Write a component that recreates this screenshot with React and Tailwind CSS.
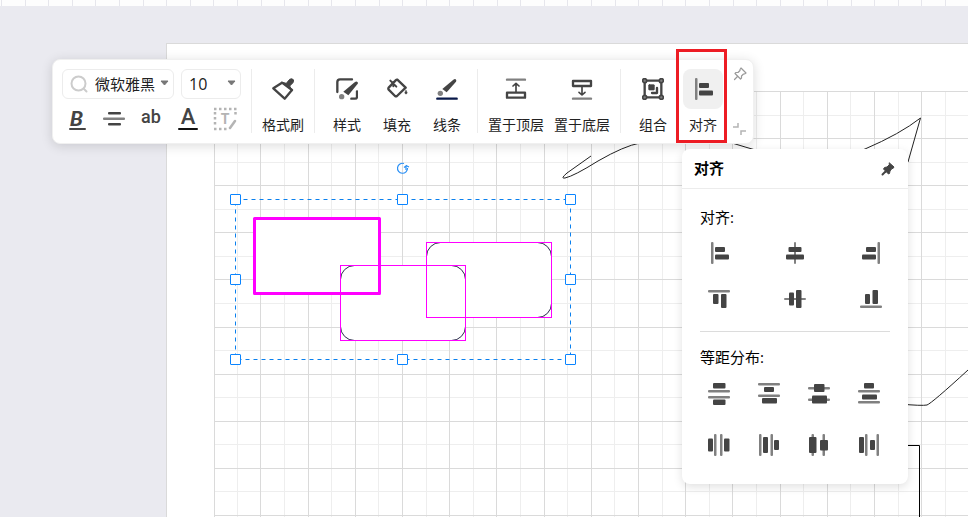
import { useState } from 'react';

const DARK = '#444444';
const GREY = '#808080';

// l = thin guide lines, b = solid bars, each as [x, y, width, height] on a 22px grid
const alignIcons = [
  { name: '左对齐', l: [[3, 0, 2.5, 22]], b: [[7, 5, 10, 5], [7, 12.5, 14, 5]] },
  { name: '水平居中', l: [[10, 0, 2, 22]], b: [[4.5, 5, 13, 5], [2, 12.5, 18, 5]] },
  { name: '右对齐', l: [[17.5, 0, 2.5, 22]], b: [[6, 5, 10, 5], [2, 12.5, 14, 5]] },
  { name: '顶端对齐', l: [[0, 2, 22, 2.5]], b: [[5, 6, 5.5, 10], [13, 6, 5.5, 14]] },
  { name: '垂直居中', l: [[0, 10, 22, 2]], b: [[5, 4.5, 5, 13], [12, 2, 5.5, 18]] },
  { name: '底端对齐', l: [[0, 17.5, 22, 2.5]], b: [[5, 6, 5, 10], [12.5, 2, 5.5, 14]] },
];

const spreadIcons = [
  { name: '垂直等距', l: [[0, 7, 22, 2.5], [0, 13, 22, 2.5]], b: [[5, 0, 12.5, 5.5], [5, 16.5, 12.5, 5.5]] },
  { name: '顶部等距', l: [[0, 0, 22, 2.5], [0, 11.5, 22, 2.5]], b: [[6, 4, 10, 5], [4, 15, 15, 5.5]] },
  { name: '垂直中心等距', l: [[0, 4, 22, 2.5], [0, 15.5, 22, 2.5]], b: [[6, 1, 10.5, 8], [4, 12.5, 15, 8]] },
  { name: '底部等距', l: [[0, 7, 22, 2.5], [0, 18, 22, 2.5]], b: [[6, 0, 10, 5.5], [4, 11.5, 15, 5]] },
  { name: '水平等距', l: [[6, 0, 2.5, 22], [12, 0, 2.5, 22]], b: [[0, 4.5, 5, 13], [16, 4.5, 5.5, 13]] },
  { name: '左侧等距', l: [[1, 0, 2.5, 22], [12.5, 0, 2.5, 22]], b: [[5, 3, 5, 16], [16, 6, 5, 10]] },
  { name: '水平中心等距', l: [[3.5, 0, 2.5, 22], [14.5, 0, 2.5, 22]], b: [[1, 3, 7.5, 16], [12, 6, 8, 10.5]] },
  { name: '右侧等距', l: [[7, 0, 2.5, 22], [18.5, 0, 2.5, 22]], b: [[1, 3, 5, 16], [12, 6, 5, 10]] },
];

function BarIcon({ icon }) {
  return (
    <svg width="22" height="22" viewBox="0 0 22 22">
      {icon.l.map(([x, y, w, h]) => <rect key={`l${x}-${y}`} x={x} y={y} width={w} height={h} rx="1" fill={GREY} />)}
      {icon.b.map(([x, y, w, h]) => <rect key={`b${x}-${y}`} x={x} y={y} width={w} height={h} rx="1" fill={DARK} />)}
    </svg>
  );
}

function Icon({ children }) {
  return (
    <svg width="22" height="22" viewBox="0 0 66 66" fill="none" stroke={DARK} strokeWidth="7" strokeLinecap="round" strokeLinejoin="round">
      {children}
    </svg>
  );
}

function PainterIcon() {
  return (
    <Icon>
      <path d="M4 31L30 14L60 36L38 62Z" />
      <path d="M30 13L43 16L53 4Q59 0 64 5Q67 10 62 15L53 24L60 37Z" fill={DARK} strokeWidth="3" />
    </Icon>
  );
}

function StyleIcon() {
  return (
    <Icon>
      <path d="M4 42V12Q4 4 12 4H48M63 40V56Q63 62 57 62H46" />
      <path d="M63 11Q68 14 64 19L37 52L22 41L56 13Q60 10 63 11Z" fill={DARK} stroke="none" />
      <circle cx="17" cy="56" r="8" fill={GREY} stroke="none" />
    </Icon>
  );
}

function FillIcon() {
  return (
    <Icon>
      <path d="M34 5L59 29L33 54Q30 56 27 54L8 35Q6 32 8 29L29 7Q32 4 34 5Z" />
      <path d="M13 8L31 26M22 12V25" strokeWidth="6" />
      <path d="M60 38Q53 46 60 48Q67 46 60 38Z" fill={DARK} strokeWidth="2" />
    </Icon>
  );
}

function LineIcon() {
  return (
    <Icon>
      <path d="M58 3Q63 6 60 11L32 43L19 33L52 5Q56 2 58 3Z" fill={DARK} stroke="none" />
      <circle cx="13" cy="46" r="8" fill={GREY} stroke="none" />
      <path d="M4 62H62" stroke="#081848" />
    </Icon>
  );
}

function TopIcon() {
  return (
    <Icon>
      <path d="M6 5H60" stroke={GREY} />
      <path d="M33 42V17M24 24L33 16L42 24" strokeWidth="5" />
      <path d="M6 44H60V59H6Z" />
    </Icon>
  );
}

function BottomIcon() {
  return (
    <Icon>
      <path d="M6 9H60V24H6Z" />
      <path d="M33 26V49M24 43L33 51L42 43" strokeWidth="5" />
      <path d="M6 62H60" stroke={GREY} />
    </Icon>
  );
}

function GroupIcon() {
  return (
    <Icon>
      <path d="M8 8H58V58H8Z" />
      {[[8, 8], [58, 8], [8, 58], [58, 58]].map(([x, y]) => (
        <circle key={`${x}-${y}`} cx={x} cy={y} r="6" fill={GREY} strokeWidth="5" />
      ))}
      <rect x="20" y="20" width="17" height="16" rx="2" fill={DARK} strokeWidth="2" />
      <path d="M45 30V45H30" strokeWidth="7" />
    </Icon>
  );
}

function Tool({ label, active, wide, children }) {
  return (
    <button className={`flex flex-col items-center ${wide ? 'w-[66px]' : 'w-[50px]'}`}>
      <span className={`flex size-10 items-center justify-center rounded-lg ${active ? 'bg-[#f0f0f0]' : ''}`}>{children}</span>
      <span className="mt-1.5 text-sm leading-5 whitespace-nowrap text-[#222]">{label}</span>
    </button>
  );
}

function Divider() {
  return <div className="h-16 w-px bg-[#ececec]" />;
}

function Arrow() {
  return (
    <svg className="pointer-events-none absolute top-2.5 right-1" width="9" height="6" viewBox="0 0 9 6">
      <path d="M1 1H8L4.500 5Z" fill="#777" stroke="#777" strokeLinejoin="round" />
    </svg>
  );
}

function TextTools() {
  const [font, setFont] = useState('微软雅黑');
  const [size, setSize] = useState('10');

  return (
    <div className="flex w-[189px] flex-col gap-2">
      <div className="flex gap-[7px]">
        <div className="relative h-[30px] w-28 rounded-md border border-[#ececec]">
          <svg className="pointer-events-none absolute top-[5px] left-[7px]" width="18" height="18" viewBox="0 0 18 18" fill="none" stroke="#ccc" strokeWidth="2" strokeLinecap="round">
            <circle cx="8.500" cy="8.500" r="7" />
            <path d="M14 14L16.500 16.500" />
          </svg>
          <select aria-label="字体" value={font} onChange={(e) => setFont(e.target.value)} className="h-full w-full appearance-none pl-8 text-[15px] leading-7 text-[#222] outline-none">
            <option>微软雅黑</option>
            <option>宋体</option>
          </select>
          <Arrow />
        </div>
        <div className="relative h-[30px] w-[60px] rounded-md border border-[#ececec]">
          <select aria-label="字号" value={size} onChange={(e) => setSize(e.target.value)} className="h-full w-full appearance-none pl-[7px] text-base leading-7 text-[#222] outline-none">
            <option>10</option>
            <option>12</option>
          </select>
          <Arrow />
        </div>
      </div>
      <div className="flex gap-[13px] pl-[3px]">
        <button aria-label="加粗">
          <svg className="overflow-visible" width="24" height="24" viewBox="0 0 24 24" fill={DARK}>
            <text x="5" y="19" fontFamily="Roboto, sans-serif" fontSize="21" fontWeight="700" fontStyle="italic">B</text>
            <rect x="4" y="21" width="17" height="2" rx="1" />
          </svg>
        </button>
        <button aria-label="居中">
          <svg width="24" height="24" viewBox="0 0 24 24" fill={DARK}>
            <rect x="6" y="5" width="13" height="2.500" rx="1" />
            <rect x="1" y="10.500" width="22" height="2.500" rx="1" fill={GREY} />
            <rect x="6" y="16" width="13" height="2.500" rx="1" />
          </svg>
        </button>
        <button aria-label="大小写" className="h-6 w-6 font-['Roboto',sans-serif] text-lg leading-5 font-medium text-[#444]">
          <span className="block h-6">ab</span>
        </button>
        <button aria-label="字体颜色" className="flex h-6 w-6 flex-col items-center font-['Roboto',sans-serif] text-[22px] leading-[19px] font-medium text-[#444]">
          <span>A</span>
          <span className="mt-0.5 h-0.5 w-5 rounded-full bg-[#111]" />
        </button>
        <button aria-label="文本框">
          <svg width="24" height="24" viewBox="0 0 24 24" fill="none" stroke="#b4b4b4" strokeWidth="2.500">
            <path d="M1 2H24M1 22H14M2 5V20M22.500 5V10" strokeDasharray="2.500 2.500" />
            <path d="M17 21L22 14" strokeLinecap="round" />
            <text x="12" y="17" textAnchor="middle" fontFamily="Roboto, sans-serif" fontSize="14" fontWeight="700" fill="#b4b4b4" stroke="none">T</text>
          </svg>
        </button>
      </div>
    </div>
  );
}

function Toolbar() {
  return (
    <div className="absolute top-[59px] left-[52px] flex h-[85px] rounded-lg border border-[#f0f0f0] bg-white pt-[9px] pl-[9px] shadow-[0_2px_12px_rgba(0,0,0,0.14)]">
      <TextTools />
      <Divider />
      <div className="flex items-start px-1.5">
        <Tool label="格式刷"><PainterIcon /></Tool>
      </div>
      <Divider />
      <div className="flex items-start pr-[5px] pl-[7px]">
        <Tool label="样式"><StyleIcon /></Tool>
        <Tool label="填充"><FillIcon /></Tool>
        <Tool label="线条"><LineIcon /></Tool>
      </div>
      <Divider />
      <div className="flex items-start px-[5px]">
        <Tool label="置于顶层" wide><TopIcon /></Tool>
        <Tool label="置于底层" wide><BottomIcon /></Tool>
      </div>
      <Divider />
      <div className="flex items-start pl-[7px]">
        <Tool label="组合"><GroupIcon /></Tool>
        <div className="relative">
          <Tool label="对齐" active><BarIcon icon={alignIcons[0]} /></Tool>
          <div className="pointer-events-none absolute -top-5 -left-0.5 h-[94px] w-[51px] border-3 border-[#ed1c24]" />
        </div>
      </div>
      <div className="flex w-[25px] flex-col items-start justify-between pb-2 pl-[5px]">
        <button aria-label="固定" className="-mt-0.5">
          <svg width="14" height="14" viewBox="0 0 14 14" fill="none" stroke="#999" strokeWidth="1.200" strokeLinejoin="round" strokeLinecap="round">
            <path d="M8 1L13 6L11.500 7H10.500L8.500 9V11L7.500 12L2 6.500L3 5.500H5L7 3.500V2.500Z" />
            <path d="M4.500 9.500L1.500 12.500" />
          </svg>
        </button>
        <button aria-label="收起">
          <svg width="13" height="12" viewBox="0 0 13 12" fill="none" stroke="#b4b4b4" strokeWidth="1.500">
            <path d="M0 4H5V0M8 12V8H13" />
          </svg>
        </button>
      </div>
    </div>
  );
}

function AlignPanel() {
  return (
    <section className="absolute top-[149px] left-[682px] w-[226px] rounded-lg bg-white pb-7 text-[15px] text-black shadow-[0_3px_10px_rgba(0,0,0,0.12)]">
      <header className="flex h-10 items-center justify-between border-b border-[#ececec] px-3">
        <h2 className="font-bold">对齐</h2>
        <button aria-label="固定面板">
          <svg width="16" height="14" viewBox="0 0 16 14" fill={DARK} stroke={DARK} strokeLinejoin="round" strokeLinecap="round">
            <path d="M9.500 1L14 5L13 6.500H12L10 9L9.500 11.500L8.500 12L3.500 7L4.500 5.500L7 5L9 3Z" />
            <path d="M5.500 9.500L2.500 12.500" strokeWidth="2" />
          </svg>
        </button>
      </header>
      <div className="px-[18px]">
        <h3 className="pt-[18px] leading-5">对齐:</h3>
        <div className="mt-[15px] grid grid-cols-[22px_22px_22px] justify-between gap-y-6 px-2">
          {alignIcons.map((icon) => (
            <button key={icon.name} aria-label={icon.name}><BarIcon icon={icon} /></button>
          ))}
        </div>
        <hr className="mt-[21px] border-[#dcdcdc]" />
        <h3 className="mt-[15px] leading-5">等距分布:</h3>
        <div className="mt-4 grid grid-cols-[22px_22px_22px_22px] justify-between gap-y-[29px] pr-2.5 pl-2">
          {spreadIcons.map((icon) => (
            <button key={icon.name} aria-label={icon.name}><BarIcon icon={icon} /></button>
          ))}
        </div>
      </div>
    </section>
  );
}

const range = (n) => Array.from({ length: n }, (_, i) => i);

function Grid() {
  const xs = range(140).map((i) => Math.max(214, Math.round(213.25 + i * 23.6)));
  const ys = range(90).map((i) => Math.round(91 + i * 23.55));
  const color = (i) => (i % 2 ? '#eeeeee' : '#dadada');
  // minor lines go first so that the major ones stay unbroken
  const minorFirst = (list) => list.map((v, i) => [v, i]).sort((a, b) => (b[1] % 2) - (a[1] % 2));
  const lines = [
    ...minorFirst(xs).map(([v, i]) => ({ v, i, vertical: true })),
    ...minorFirst(ys).map(([v, i]) => ({ v, i, vertical: false })),
  ].sort((a, b) => (b.i % 2) - (a.i % 2));

  return (
    <g>
      {lines.map(({ v, i, vertical }) => (
        vertical
          ? <rect key={`x${i}`} x={v} y="91" width="1" height="100%" fill={color(i)} />
          : <rect key={`y${i}`} x="214" y={v} width="100%" height="1" fill={color(i)} />
      ))}
    </g>
  );
}

function Canvas() {
  const handles = [[235, 199], [402, 199], [570, 199], [235, 279], [570, 279], [235, 359], [402, 359], [570, 359]];

  return (
    <svg className="absolute inset-0 h-full w-full">
      <rect width="100%" height="100%" fill="#eaeaf0" />
      <rect width="100%" height="6" fill="#fdfdfd" />
      {range(140).map((i) => <rect key={i} x={Math.round(1 + i * 23.6)} width="1" height="6" fill="#e6e6ec" />)}
      <rect x="166" y="43" width="100%" height="100%" fill="#dadada" />
      <rect x="167" y="44" width="100%" height="100%" fill="#fff" />
      <Grid />

      <g fill="none" stroke="#222">
        <path d="M591 156L567 173Q560 179 565 178Q574 176 598 161Q624 146 640 143Q690 130 732 143Q790 161 812 162Q838 160 865 149Q900 134 920.500 118L908 162" />
        <path d="M900 404Q922 406 927 405Q932 403 968 370" />
        <path d="M900 445.500H919.500V2000" stroke="#000" />
      </g>

      <rect x="254.500" y="218.500" width="125" height="75" fill="#fff" />
      <g fill="#fff" stroke="#2c2c4c">
        <rect x="426.500" y="242.500" width="125" height="75" rx="14" />
        <rect x="340.500" y="265.500" width="125" height="75" rx="14" />
      </g>
      <g fill="none" stroke="#ff00ff">
        <rect x="426.500" y="242.500" width="125" height="75" />
        <rect x="340.500" y="265.500" width="125" height="75" />
        <rect x="254.500" y="218.500" width="125" height="75" strokeWidth="3" strokeLinejoin="round" />
      </g>

      <rect x="235.500" y="199.500" width="335" height="160" fill="none" stroke="#0a80ee" strokeDasharray="4 4" />
      {handles.map(([x, y]) => (
        <rect key={`${x}-${y}`} x={x - 4.5} y={y - 4.5} width="10" height="10" rx="0.500" fill="#fff" stroke="#0a84ff" />
      ))}
      <g fill="none" stroke="#2a90f5">
        <path d="M404 163.500A5 5 0 1 0 407.500 168" strokeWidth="1.200" />
        <path d="M406 170V166L404 167.500M406 165.500L409 167" strokeWidth="1.200" />
      </g>
    </svg>
  );
}

export default function App() {
  return (
    <main className="relative h-screen overflow-hidden font-['Open_Sans','Noto_Sans_CJK_SC',sans-serif]">
      <Canvas />
      <Toolbar />
      <AlignPanel />
    </main>
  );
}
